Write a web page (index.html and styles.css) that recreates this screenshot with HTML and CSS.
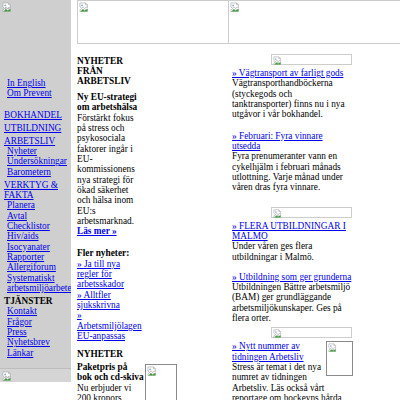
FILE: index.html
```html
<!DOCTYPE html>
<html lang="sv">
<head>
  <meta charset="UTF-8">
  <title>Prevent – Nyheter från arbetsliv</title>
  <link rel="stylesheet" href="styles.css">
</head>
<body>
  <!-- placeholder icon shown where a picture is missing -->
  <svg class="defs" width="0" height="0" aria-hidden="true">
    <symbol id="broken" viewBox="0 0 16 16">
      <path d="M1.5 1.5h9l3 3v5l-2-1.5-2.5 2-2.5-2-2.5 2-2.5-2z" fill="#fff" stroke="#a3a3a3"/>
      <path d="M10.5 1.5v3h3" fill="none" stroke="#a3a3a3"/>
      <circle cx="5" cy="5.5" r="1.4" fill="#7fa7d6"/>
      <path d="M1.5 12.5l2.5-2 2.5 2 2.5-2 2.5 2 2-1.5v4h-12z" fill="#fff" stroke="#a3a3a3"/>
      <path d="M2 15l4-3.5 3 2 4.5-2.5v4z" fill="#3f9b3f"/>
    </symbol>
  </svg>

  <div class="page">
    <aside class="sidebar">
      <div class="logo"><svg class="ico"><use href="#broken"/></svg></div>

      <div class="lang">
        <a href="#">In English</a>
        <a href="#">Om Prevent</a>
      </div>

      <nav class="menu">
        <a class="top" href="#">BOKHANDEL</a>
        <a class="top" href="#">UTBILDNING</a>
        <a class="top" href="#">ARBETSLIV</a>
        <a class="sub" href="#">Nyheter</a>
        <a class="sub" href="#">Undersökningar</a>
        <a class="sub" href="#">Barometern</a>
        <a class="top" href="#">VERKTYG &amp; FAKTA</a>
        <a class="sub" href="#">Planera</a>
        <a class="sub" href="#">Avtal</a>
        <a class="sub" href="#">Checklistor</a>
        <a class="sub" href="#">Hiv/aids</a>
        <a class="sub" href="#">Isocyanater</a>
        <a class="sub" href="#">Rapporter</a>
        <a class="sub" href="#">Allergiforum</a>
        <a class="sub" href="#">Systematiskt arbetsmiljöarbete</a>
        <span class="top label">TJÄNSTER</span>
        <a class="sub" href="#">Kontakt</a>
        <a class="sub" href="#">Frågor</a>
        <a class="sub" href="#">Press</a>
        <a class="sub" href="#">Nyhetsbrev</a>
        <a class="sub" href="#">Länkar</a>
      </nav>

      <div class="foot"><svg class="ico"><use href="#broken"/></svg></div>
    </aside>

    <main class="main">
      <div class="banner">
        <div class="ph banner-left"><svg class="ico"><use href="#broken"/></svg></div>
        <div class="ph banner-right"><svg class="ico"><use href="#broken"/></svg></div>
      </div>

      <div class="cols">
        <div class="news">
          <div class="lead">
            <h2>NYHETER FRÅN ARBETSLIV</h2>
            <h3>Ny EU-strategi om arbetshälsa</h3>
            <p>
              Förstärkt fokus på stress och psykosociala faktorer ingår i EU-kommissionens nya strategi för ökad säkerhet och hälsa inom EU:s arbetsmarknad.
              <br><a class="more" href="#">Läs mer »</a>
            </p>
            <h4>Fler nyheter:</h4>
            <a href="#">» Ja till nya regler för arbetsskador</a><br>
            <a href="#">» Alltfler sjukskrivna</a><br>
            <a href="#">» Arbetsmiljölagen EU-anpassas</a>
          </div>

          <h2 class="section">NYHETER</h2>
          <div class="offer">
            <p>
              <b>Paketpris på bok och cd-skiva</b><br>
              Nu erbjuder vi 200 kronors rabatt när du köper boken och cd-skivan tillsammans.
            </p>
            <div class="ph tall"><svg class="ico"><use href="#broken"/></svg></div>
          </div>
        </div>

        <div class="feed">
          <div class="ph strip"><svg class="ico"><use href="#broken"/></svg></div>
          <div class="item">
            <a href="#">» Vägtransport av farligt gods</a><br>
            Vägtransporthandböckerna (styckegods och tanktransporter) finns nu i nya utgåvor i vår bokhandel.
          </div>

          <div class="item spaced">
            <a href="#">» Februari: Fyra vinnare utsedda</a><br>
            Fyra prenumeranter vann en cykelhjälm i februari månads utlottning. Varje månad under våren dras fyra vinnare.
          </div>

          <div class="ph strip gap-big"><svg class="ico"><use href="#broken"/></svg></div>
          <div class="item">
            <a href="#">» FLERA UTBILDNINGAR I MALMÖ</a><br>
            Under våren ges flera utbildningar i Malmö.
          </div>

          <div class="item spaced-sm">
            <a href="#">» Utbildning som ger grunderna</a><br>
            Utbildningen Bättre arbetsmiljö (BAM) ger grundläggande arbetsmiljökunskaper. Ges på flera orter.
          </div>

          <div class="ph strip gap-sm"><svg class="ico"><use href="#broken"/></svg></div>
          <div class="item">
            <div class="ph cover"><svg class="ico"><use href="#broken"/></svg></div>
            <a href="#">» Nytt nummer av tidningen Arbetsliv</a><br>
            Stress är temat i det nya numret av tidningen Arbetsliv. Läs också vårt reportage om hockeyns hårda tacklingar.
          </div>
        </div>
      </div>
    </main>
  </div>
</body>
</html>
```

FILE: styles.css
```css
/* Base */
body {
  margin: 0;
  font-family: "Liberation Serif", "Times New Roman", serif;
  font-size: 9.3px;
  line-height: 10.35px;
  color: #000;
  background: #fff;
}

a {
  color: #0000ee;
}

.defs {
  position: absolute;
}

.ico {
  display: block;
  width: 10px;
  height: 10px;
}

.page {
  display: flex;
  gap: 6px;
}

/* Left menu column */
.sidebar {
  flex: none;
  width: 71px;
  align-self: flex-start;
  overflow: hidden;
  background: #cfcfcf;
}

.logo {
  height: 76px;
}

.logo .ico {
  margin: 2px 0 0 2px;
}

.lang a {
  display: block;
  padding-left: 7px;
}

.menu {
  margin-top: 11px;
}

.menu a,
.menu .label {
  display: block;
}

.menu .top {
  margin-top: 2.65px;
  padding-left: 4px;
}

.menu .sub {
  padding-left: 7px;
}

.menu .label {
  font-weight: bold;
}

.foot {
  margin-top: 10px;
  height: 13px;
  border-top: 1px solid #bdbdbd;
  background: #d5d5d5;
}

.foot .ico {
  margin: 2px 0 0 2px;
}

/* Main area */
.main {
  flex: 1;
  min-width: 0;
  overflow: hidden;
}

.ph {
  box-sizing: border-box;
  border: 1px solid #cdcdcd;
  background: #fff;
}

.ph .ico {
  margin: 1px 0 0 1px;
}

.banner {
  display: flex;
  height: 44px;
}

.banner-left {
  flex: none;
  width: 152px;
}

.banner-right {
  flex: none;
  width: 190px;
  border-left: none;
}

.cols {
  display: grid;
  grid-template-columns: 100px 120.5px;
  column-gap: 55px;
  align-items: start;
}

/* Middle news column */
.news {
  padding-top: 11.8px;
}

.lead {
  width: 64px;
}

h2, h3, h4 {
  margin: 0;
  font-size: 9.3px;
  font-weight: bold;
}

h3 {
  margin-top: 5px;
}

.lead p {
  margin: 0;
}

.more {
  font-weight: bold;
}

h4 {
  margin-top: 11.6px;
}

h2.section {
  margin-top: 7.6px;
}

.offer {
  display: flex;
  gap: 1px;
  margin-top: 2.6px;
}

.offer p {
  margin: 0;
  width: 68px;
}

.tall {
  flex: none;
  width: 32px;
  height: 44px;
  margin-top: 2px;
  border-color: #8a8a8a;
}

/* Right feed column */
.feed {
  padding-top: 10px;
}

.strip {
  width: 81px;
  height: 11px;
  margin: 0 1px 3px auto;
}

.feed .ico {
  width: 9px;
  height: 9px;
}

.gap-big {
  margin-top: 14px;
}

.gap-sm {
  margin-top: 4px;
}

.spaced {
  margin-top: 11px;
}

.spaced-sm {
  margin-top: 9.4px;
}

.cover {
  float: right;
  width: 27px;
  height: 35px;
  margin-left: 3px;
  border-color: #8a8a8a;
}
```
